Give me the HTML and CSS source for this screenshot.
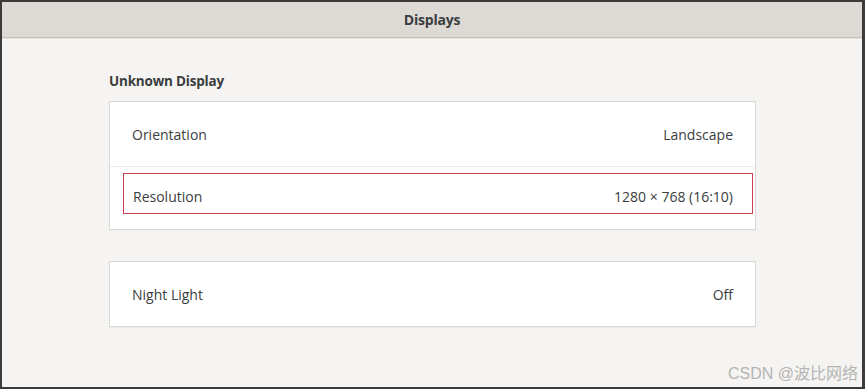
FILE: index.html
```html
<!DOCTYPE html>
<html>
<head>
<meta charset="utf-8">
<link rel="stylesheet" href="styles.css">
</head>
<body>
<div class="window">
  <header class="titlebar">Displays</header>
  <main class="content">
    <section class="group">
      <h2 class="group-title">Unknown Display</h2>
      <div class="card">
        <div class="row"><span>Orientation</span><span>Landscape</span></div>
        <div class="row row-sep"><div class="row-inner highlight"><span>Resolution</span><span>1280 × 768 (16:10)</span></div></div>
      </div>
    </section>
    <section class="group group-second">
      <div class="card">
        <div class="row"><span>Night Light</span><span>Off</span></div>
      </div>
    </section>
  </main>
  <div class="watermark">CSDN @波比网络</div>
</div>
</body>
</html>
```
FILE: styles.css
```css
html, body {
  margin: 0;
  padding: 0;
}
body {
  width: 865px;
  height: 389px;
  background: #3a3a3a;
  font-family: "Open Sans", "Noto Sans", sans-serif;
  color: #2e3436;
}
.window {
  position: relative;
  box-sizing: border-box;
  width: 865px;
  height: 389px;
  border: 2px solid #3b3b3b;
  border-right-width: 3px;
  background: #f5f4f2;
  display: flex;
  flex-direction: column;
}
.titlebar {
  height: 35px;
  background: #dddad5;
  border-bottom: 1px solid #c5c2bc;
  box-shadow: 0 1px 0 #e6e3de;
  display: flex;
  align-items: center;
  justify-content: center;
  font-weight: 700;
  font-size: 14px;
  color: #3a3d3e;
  letter-spacing: -0.2px;
}
.content {
  display: flex;
  flex-direction: column;
  align-items: center;
  padding-left: 1px;
}
.group {
  width: 647px;
}
.group-title {
  margin: 34px 0 0 0;
  height: 29px;
  font-size: 13.5px;
  font-weight: 700;
  color: #3a3d3e;
  letter-spacing: -0.2px;
}
.group-second {
  margin-top: 31px;
}
.card {
  background: #ffffff;
  border: 1px solid #dad8d4;
  box-shadow: 0 1px 1px rgba(0,0,0,0.03);
}
.row {
  height: 64px;
  box-sizing: border-box;
  display: flex;
  align-items: center;
  justify-content: space-between;
  padding: 0 22px;
  font-size: 14px;
  color: #3b3e40;
}
.row-sep {
  height: 63px;
  border-top: 1px solid #e8ebed;
  align-items: flex-start;
  padding: 6px 2px 0 13px;
}
.row-inner {
  flex: 1;
  height: 41px;
  box-sizing: border-box;
  display: flex;
  align-items: center;
  justify-content: space-between;
  padding: 5px 19px 0 9px;
}
.highlight {
  border: 1.5px solid #c9404e;
}
.watermark {
  position: absolute;
  right: 4px;
  bottom: 3px;
  font-family: "Liberation Sans", "Noto Sans CJK SC", sans-serif;
  font-size: 16px;
  color: #b4b4b4;
}
```
